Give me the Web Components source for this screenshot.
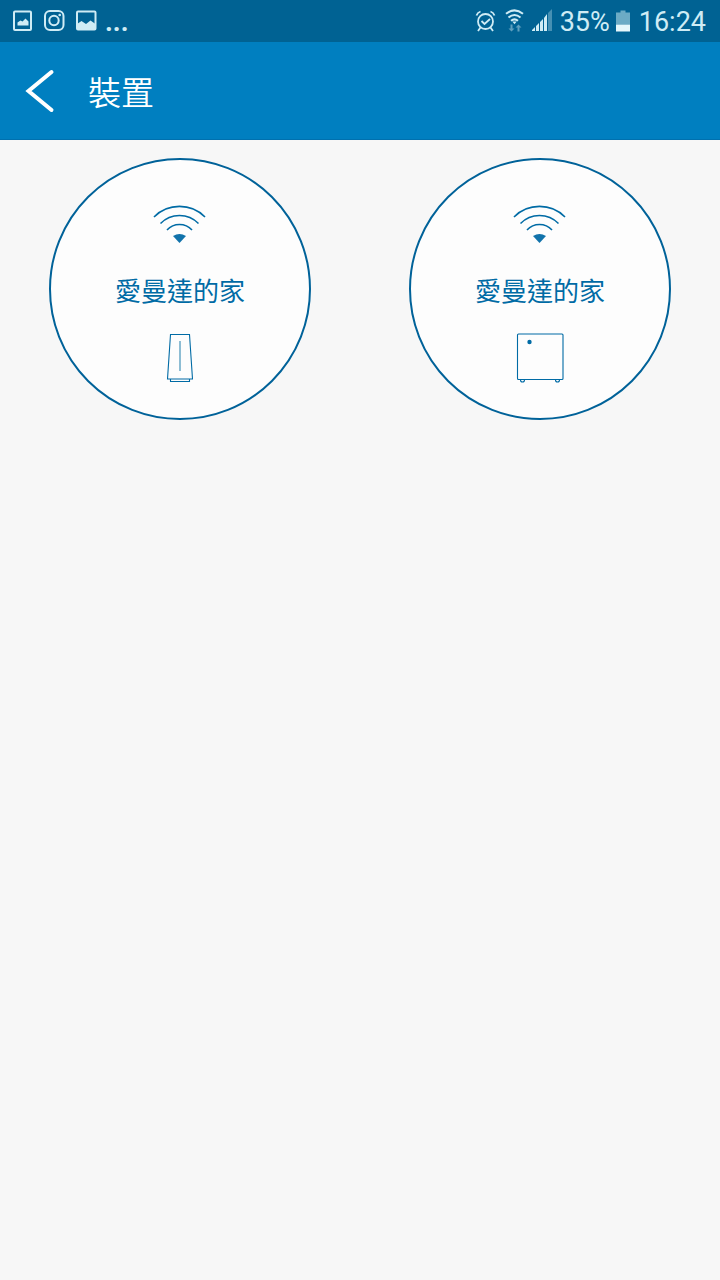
<!DOCTYPE html>
<html lang="zh-Hant">
<head>
<meta charset="UTF-8">
<meta name="viewport" content="width=device-width, initial-scale=1">
<title>裝置</title>
<style>
    :root {
        --status-bg: #006293;
        --header-bg: #007fc0;
        --page-bg: #f7f7f7;
        --line: #006299;
    }
    body {
        margin: 0;
        min-height: 100vh;
        background: var(--page-bg);
        font-family: Roboto, "Noto Sans CJK TC", sans-serif;
    }
</style>
</head>
<body>
    <status-bar battery="35%" time="16:24"></status-bar>
    <app-header>裝置</app-header>
    <device-grid>
        <device-tile type="tower">愛曼達的家</device-tile>
        <device-tile type="box">愛曼達的家</device-tile>
    </device-grid>

<script>
// --- Status Bar ---
class StatusBar extends HTMLElement {
    constructor() {
        super();
        this.attachShadow({ mode: 'open' });
    }

    connectedCallback() { this.render(); }

    render() {
        this.shadowRoot.innerHTML = `
            <style>
                :host { display: flex; align-items: center; justify-content: space-between; height: 42px; padding: 0 14px 0 12px; background: var(--status-bg); color: #cfecf5; font-size: 27px; line-height: 42px; }
                .group { display: flex; align-items: center; }
                .left { gap: 10px; }
                .right { gap: 6px; }
                svg { display: block; flex: none; }
                span { padding-top: 2px; line-height: 40px; }
                .more { font-weight: 700; margin-left: -2px; }
                .time { padding-left: 2px; }
            </style>
            <div class="group left">
                <svg width="22" height="24" viewBox="0 0 22 24">
                    <rect x="2" y="2.500" width="17" height="18.500" rx="1" fill="none" stroke="currentColor" stroke-width="2"/>
                    <path d="M5.500 16.500v-3l3-2 2 1 3-3 3 3v4z" fill="currentColor"/>
                </svg>
                <svg width="21" height="24" viewBox="0 0 21 24">
                    <rect x="1" y="2" width="18.500" height="19" rx="5" fill="none" stroke="currentColor" stroke-width="2"/>
                    <circle cx="10" cy="11.500" r="4.700" fill="none" stroke="currentColor" stroke-width="2"/>
                    <circle cx="15.700" cy="6" r="1.300" fill="currentColor"/>
                </svg>
                <svg width="22" height="24" viewBox="0 0 22 24">
                    <rect x="2" y="2.500" width="18.500" height="18" rx="1" fill="none" stroke="currentColor" stroke-width="2"/>
                    <path d="M2 21v-6l4.500-3 4.500 3 4.500-3.500 5 3.500v6z" fill="currentColor"/>
                </svg>
                <span class="more">...</span>
            </div>
            <div class="group right">
                <svg width="24" height="24" viewBox="0 0 24 24" fill="none" stroke="currentColor" stroke-width="1.800">
                    <circle cx="12.500" cy="12.500" r="7.500"/>
                    <path d="M8.500 12l3 3 5.500-5M3.500 6.500A6 6 0 0 1 7.500 2.500M17.500 2.500A6 6 0 0 1 21.500 6.500M7.500 18.500L5 22M17.500 18.500L20 22"/>
                </svg>
                <svg width="22" height="24" viewBox="0 0 22 24" fill="none" stroke="currentColor" stroke-width="2">
                    <path d="M3 4.800Q11.500-2 20 4.800M5.500 8.500Q11.500 3.500 17.500 8.500M8 11.700Q11.500 9 15 11.700"/>
                    <path d="M9.300 12.600h4.400l-2.200 2.600z" fill="currentColor" stroke="none"/>
                    <path d="M7.500 15.500h2v4h2l-3 3-3-3h2zM14.500 22.500h2v-4h2l-3-3-3 3h2z" fill="#5f9fbe" stroke="none"/>
                </svg>
                <svg width="23" height="24" viewBox="0 0 23 24" fill="currentColor">
                    <path d="M1 22v-1l3-3v4zM5 22v-5l3-3v8zM9 22v-9l3-3v12zM13 22v-13l3-4v17z"/>
                    <path d="M17 22v-18l4-4v22z" fill="#4690b3"/>
                </svg>
                <span>${this.getAttribute('battery')}</span>
                <svg width="15" height="24" viewBox="0 0 15 24">
                    <path d="M4.500 1.500h5v2H14v12H0v-12h4.500z" fill="#6cabc5"/>
                    <path d="M0 15.500h14v7H0z" fill="#e6f7fb"/>
                </svg>
                <span class="time">${this.getAttribute('time')}</span>
            </div>
        `;
    }
}
customElements.define('status-bar', StatusBar);

// --- Header with back button ---
class AppHeader extends HTMLElement {
    constructor() {
        super();
        this.attachShadow({ mode: 'open' });
    }

    connectedCallback() {
        this.shadowRoot.innerHTML = `
            <style>
                :host { display: flex; align-items: center; box-sizing: border-box; height: 98px; background: var(--header-bg); border-bottom: 1px solid #0070ae; color: #fff; }
                button { display: flex; align-items: center; justify-content: center; width: 80px; height: 97px; padding: 0; border: 0; background: none; color: inherit; cursor: pointer; }
                h1 { margin: 0; padding: 6px 8px 0; font-size: 33px; line-height: 48px; font-weight: 350; }
            </style>
            <button aria-label="返回">
                <svg width="30" height="44" viewBox="0 0 30 44" fill="none" stroke="currentColor" stroke-width="4" stroke-linecap="round">
                    <path d="M26.500 3L3.500 22 26.500 41"/>
                </svg>
            </button>
            <h1><slot></slot></h1>
        `;
        this.shadowRoot.querySelector('button').onclick = () => history.back();
    }
}
customElements.define('app-header', AppHeader);

// --- Device Grid ---
class DeviceGrid extends HTMLElement {
    constructor() {
        super();
        this.attachShadow({ mode: 'open' });
        this.shadowRoot.innerHTML = `
            <style>
                :host { display: grid; grid-template-columns: repeat(2, 1fr); justify-items: center; row-gap: 34px; padding: 18px 0; }
            </style>
            <slot></slot>
        `;
    }
}
customElements.define('device-grid', DeviceGrid);

// --- Device Tile ---
const DEVICE_ICONS = {
    tower: `
        <path d="M21.500 3.500h19l3 44.500h-25z"/>
        <path d="M21.500 48v2.500h19v-2.500"/>
        <path d="M31 10v30" stroke="#8dbdd4" stroke-width="2"/>`,
    box: `
        <rect x="8.500" y="3" width="45.500" height="45.500" rx="1"/>
        <path d="M11.500 49q0 2 2 2t2-2M46.500 49q0 2 2 2t2-2"/>
        <circle cx="20.500" cy="11" r="2.200" fill="currentColor" stroke="none"/>`
};

class DeviceTile extends HTMLElement {
    constructor() {
        super();
        this.attachShadow({ mode: 'open' });
    }

    connectedCallback() {
        this.shadowRoot.innerHTML = `
            <style>
                :host { display: block; }
                button { display: flex; flex-direction: column; align-items: center; box-sizing: border-box; width: 262px; height: 262px; padding: 45px 0 0; border: 2px solid var(--line); border-radius: 50%; background: #fdfdfd; color: #006ba5; font-family: inherit; cursor: pointer; }
                .name { margin: 27px 0 19px; font-size: 26px; line-height: 40px; font-weight: 400; }
                svg { display: block; }
            </style>
            <button>
                <svg width="54" height="40" viewBox="0 0 54 40" fill="none" stroke="currentColor" stroke-width="1.600">
                    <path d="M1 12A36 36 0 0 1 52 12M7.500 18.500A26.500 26.500 0 0 1 45.500 18.500M14 25A17 17 0 0 1 39 25"/>
                    <path d="M20 31A12 12 0 0 1 33 31L26.500 38z" fill="#1273ab" stroke="none"/>
                </svg>
                <span class="name"><slot></slot></span>
                <svg width="62" height="54" viewBox="0 0 62 54" fill="none" stroke="currentColor" stroke-width="1.100">${DEVICE_ICONS[this.getAttribute('type')]}</svg>
            </button>
        `;
    }
}
customElements.define('device-tile', DeviceTile);
</script>
</body>
</html>
